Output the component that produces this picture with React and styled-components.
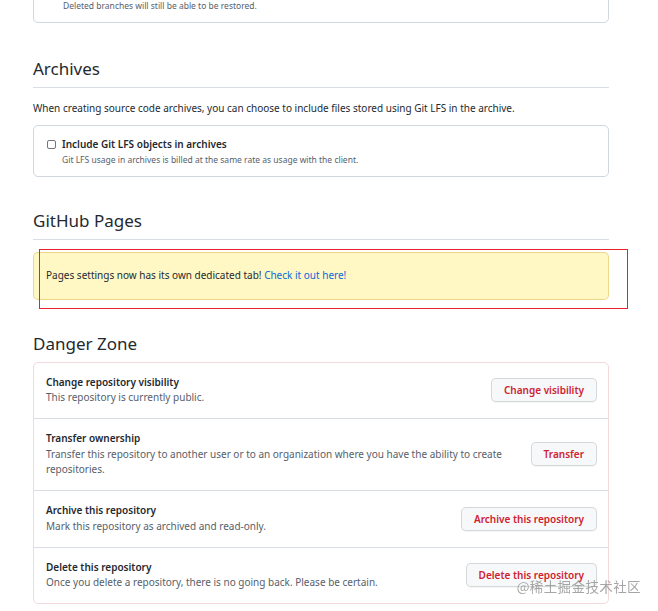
import React from "react";
import styled, { createGlobalStyle } from "styled-components";

const FONT = `"Segoe UI", "Noto Sans", "Noto Sans CJK SC", sans-serif`;

const Global = createGlobalStyle`
  html, body { margin: 0; padding: 0; background: #ffffff; }
  body { font-family: ${FONT}; color: #24292f; overflow: hidden; }
  * { box-sizing: border-box; }
`;

const Page = styled.main`
  position: relative;
  width: 576px;
  margin: -30px 0 0 33px;
  font-size: 10px;
  line-height: 1.5;
  padding-bottom: 40px;
`;

const Box = styled.div`
  border: 1px solid ${(p) => (p.$danger ? "#f3d9dc" : "#d0d7de")};
  border-radius: 5px;
  background: #fff;
  padding: ${(p) => p.$pad || "0"};
  margin-top: ${(p) => p.$mt || 0}px;
`;

const Subhead = styled.div`
  margin-top: ${(p) => p.$mt || 30}px;
  padding-bottom: 5px;
  border-bottom: ${(p) => (p.$danger ? "none" : "1px solid #d8dee4")};
`;

const Heading = styled.h2`
  margin: 0;
  font-size: 17px;
  font-weight: 400;
  line-height: 27px;
  color: #24292f;
`;

const Para = styled.p`
  margin: 13px 0 0;
  font-size: 10px;
  line-height: 15.75px;
  color: #24292f;
`;

const CheckRow = styled.label`
  display: flex;
  align-items: center;
  gap: 6px;
  font-weight: 600;
  font-size: 10px;
  line-height: 15.75px;
`;

const Check = styled.input.attrs({ type: "checkbox" })`
  appearance: none;
  width: 9px;
  height: 9px;
  margin: 0 0 0 1px;
  border: 1px solid #767676;
  border-radius: 2px;
  background: #fff;
`;

const Note = styled.div`
  font-size: 8.5px;
  line-height: 13.5px;
  color: #57606a;
  padding-left: ${(p) => p.$indent || 16}px;
`;

const Flash = styled.div`
  background: #fff8c5;
  border: 1px solid rgba(212, 167, 44, 0.4);
  border-radius: 5px;
  padding: 15px 12px 14.5px;
  font-size: 10px;
  line-height: 15.75px;
  color: #24292f;
`;

const Link = styled.a`
  color: #0969da;
  text-decoration: none;
`;

const Row = styled.div`
  display: flex;
  align-items: center;
  gap: 12px;
  padding: 12px 11px 12.5px 12px;
  & + & {
    border-top: 1px solid #d8dee4;
  }
`;

const RowText = styled.div`
  flex: 1;
  min-width: 0;
`;

const RowTitle = styled.div`
  font-weight: 600;
  font-size: 10px;
  line-height: 15.5px;
  color: #24292f;
`;

const RowDesc = styled.div`
  font-size: 10px;
  line-height: 15.5px;
  color: #57606a;
`;

const DangerButton = styled.button`
  flex-shrink: 0;
  height: 24px;
  padding: 0 12px;
  font-family: ${FONT};
  font-size: 10px;
  font-weight: 600;
  color: #cf222e;
  background: #f6f8fa;
  border: 1px solid rgba(27, 31, 36, 0.15);
  border-radius: 5px;
  box-shadow: 0 1px 0 rgba(27, 31, 36, 0.04);
  white-space: nowrap;
`;

const FlashWrap = styled.div`
  position: relative;
  margin-top: 12px;
`;

const Annotation = styled.div`
  position: absolute;
  left: 6px;
  top: -3px;
  width: 589px;
  height: 60px;
  border: 1.5px solid #e8202a;
  pointer-events: none;
`;

const Watermark = styled.div`
  position: fixed;
  right: 17px;
  top: 576px;
  font-size: 13.5px;
  line-height: 20px;
  color: rgba(150, 150, 150, 0.85);
  letter-spacing: 0.4px;
  font-family: "Noto Sans CJK SC", sans-serif;
`;

const dangerRows = [
  {
    title: "Change repository visibility",
    desc: "This repository is currently public.",
    action: "Change visibility",
  },
  {
    title: "Transfer ownership",
    desc: "Transfer this repository to another user or to an organization where you have the ability to create repositories.",
    action: "Transfer",
  },
  {
    title: "Archive this repository",
    desc: "Mark this repository as archived and read-only.",
    action: "Archive this repository",
  },
  {
    title: "Delete this repository",
    desc: "Once you delete a repository, there is no going back. Please be certain.",
    action: "Delete this repository",
  },
];

export default function App() {
  return (
    <>
      <Global />
      <Page>
        <Box $pad="12px 12px 10px">
          <CheckRow>
            <Check />
            Automatically delete head branches
          </CheckRow>
          <Note $indent={17}>Deleted branches will still be able to be restored.</Note>
        </Box>

        <Subhead $mt={32}>
          <Heading>Archives</Heading>
        </Subhead>
        <Para>
          When creating source code archives, you can choose to include files stored using Git LFS in the archive.
        </Para>
        <Box $pad="11px 12px 10px" $mt={8}>
          <CheckRow>
            <Check />
            Include Git LFS objects in archives
          </CheckRow>
          <Note $indent={16}>Git LFS usage in archives is billed at the same rate as usage with the client.</Note>
        </Box>

        <Subhead>
          <Heading>GitHub Pages</Heading>
        </Subhead>
        <FlashWrap>
          <Flash>
            Pages settings now has its own dedicated tab! <Link href="#">Check it out here!</Link>
          </Flash>
          <Annotation />
        </FlashWrap>

        <Subhead $danger>
          <Heading>Danger Zone</Heading>
        </Subhead>
        <Box $danger>
          {dangerRows.map((r) => (
            <Row key={r.title}>
              <RowText>
                <RowTitle>{r.title}</RowTitle>
                <RowDesc>{r.desc}</RowDesc>
              </RowText>
              <DangerButton>{r.action}</DangerButton>
            </Row>
          ))}
        </Box>
      </Page>
      <Watermark>@稀土掘金技术社区</Watermark>
    </>
  );
}
